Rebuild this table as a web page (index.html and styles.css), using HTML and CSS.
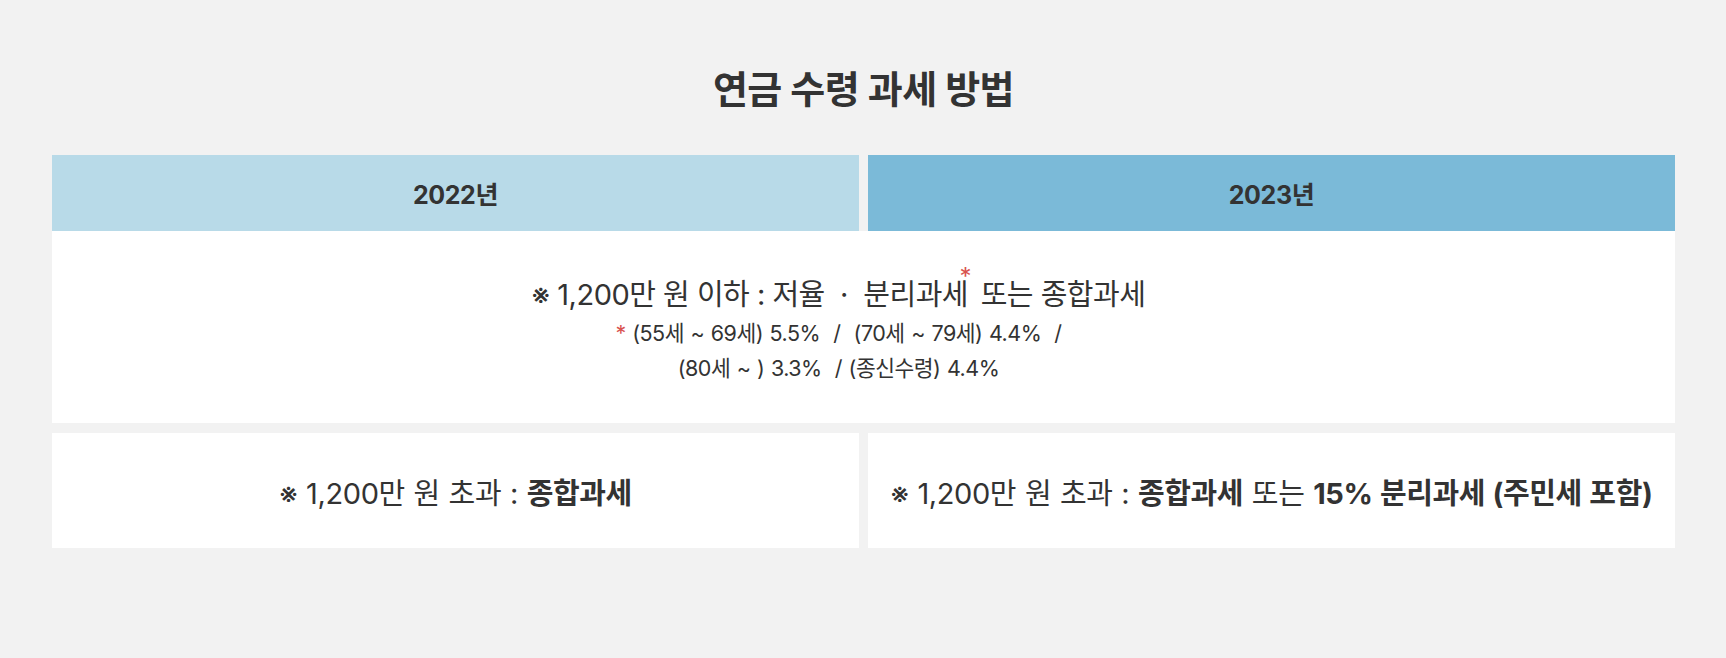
FILE: index.html
```html
<!DOCTYPE html>
<html lang="ko">

<head>
    <meta charset="UTF-8">
    <title>연금 수령 과세 방법</title>
    <link rel="stylesheet" href="styles.css">
</head>

<body>
    <section class="taxGuide">
        <h2 class="guideTitle">연금 수령 과세 방법</h2>

        <div class="yearHead">
            <div class="yearCell year2022">2022년</div>
            <div class="yearCell year2023">2023년</div>
        </div>

        <div class="lowRow">
            <p class="lowMain">※ 1,200만 원 이하 : 저율 &nbsp;·&nbsp; <span class="marked">분리과세<span class="star">*</span></span> 또는 종합과세</p>
            <p class="lowNote"><span class="noteStar">*</span> (55세 ~ 69세) 5.5% &nbsp;/&nbsp; (70세 ~ 79세) 4.4% &nbsp;/</p>
            <p class="lowNote">(80세 ~ ) 3.3% &nbsp;/ (종신수령) 4.4%</p>
        </div>

        <div class="overRow">
            <div class="overCell"><span>※ 1,200만 원 초과 : <b>종합과세</b></span></div>
            <div class="overCell"><span>※ 1,200만 원 초과 : <b>종합과세</b> 또는 <b>15% 분리과세 (주민세 포함)</b></span></div>
        </div>
    </section>
</body>

</html>
```

FILE: styles.css
```css
body {
    margin: 0;
    background-color: #f2f2f2;
    color: #333;
    font-family: Inter, "Noto Sans CJK KR", sans-serif;
}

.taxGuide {
    padding: 64px 51px 0 52px;
}

.guideTitle {
    margin: 0 0 41px;
    text-align: center;
    font-size: 38px;
    line-height: 50px;
    font-weight: 700;
    letter-spacing: -0.5px;
}

.yearHead {
    display: grid;
    grid-template-columns: 1fr 1fr;
    column-gap: 9px;
}

.yearCell {
    height: 76px;
    display: flex;
    align-items: center;
    justify-content: center;
    font-size: 25px;
    font-weight: 700;
    letter-spacing: -0.4px;
}

.year2022 {
    background-color: #b8dae8;
}

.year2023 {
    background-color: #7bbad8;
}

.lowRow {
    height: 192px;
    background: #fff;
    margin-bottom: 10px;
    padding: 8px 50px 0 0;
    display: flex;
    flex-direction: column;
    align-items: center;
    justify-content: center;
    box-sizing: border-box;
}

.lowRow p {
    margin: 0;
}

.lowMain {
    font-size: 29px;
    line-height: 38px;
    letter-spacing: -0.5px;
    margin-bottom: 2px !important;
}

.marked {
    position: relative;
    padding-right: 5px;
}

.star {
    position: absolute;
    right: 2px;
    top: -12px;
    line-height: 1;
    color: #d9534f;
    font-size: 24px;
}

.lowNote {
    font-size: 21.5px;
    line-height: 35px;
    letter-spacing: -0.5px;
    word-spacing: 1px;
}

.noteStar {
    color: #d9534f;
}

.overRow {
    display: grid;
    grid-template-columns: 1fr 1fr;
    column-gap: 9px;
}

.overCell {
    height: 115px;
    background: #fff;
    display: flex;
    align-items: center;
    justify-content: center;
    font-size: 29px;
    letter-spacing: -0.4px;
    word-spacing: 1px;
}

.overCell b {
    font-weight: 700;
}
```
